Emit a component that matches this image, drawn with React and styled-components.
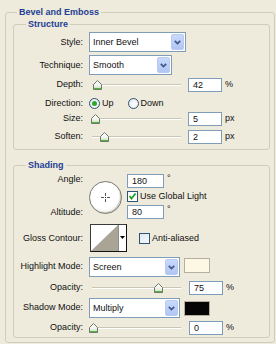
import React from 'react'
import styled, { createGlobalStyle } from 'styled-components'

// Photoshop "Bevel and Emboss" layer style panel, XP look

const GlobalStyle = createGlobalStyle`
  html, body {
    margin: 0;
    padding: 0;
    background: #eeeadc;
  }
  body {
    font-family: "Liberation Sans", Arial, sans-serif;
    font-size: 9px;
    color: #111;
  }
`

const Chevron = () => (
  <svg width="7" height="5" viewBox="0 0 7 5">
    <polyline points="0.8,0.8 3.5,3.6 6.2,0.8" fill="none" stroke="#42578a" strokeWidth="1.7" />
  </svg>
)

const Thumb = () => (
  <svg width="9" height="10" viewBox="0 0 9 10">
    <defs>
      <linearGradient id="thumbFill" x1="0" y1="0" x2="0" y2="1">
        <stop offset="0" stopColor="#ffffff" />
        <stop offset="0.6" stopColor="#eef2ea" />
        <stop offset="1" stopColor="#b5dcab" />
      </linearGradient>
    </defs>
    <path d="M0.5 4.5 L4.5 0.5 L8.5 4.5 L8.5 9.5 L0.5 9.5 Z" fill="url(#thumbFill)" stroke="#6f776b" />
    <line x1="1" y1="8.5" x2="8" y2="8.5" stroke="#4fb63f" />
  </svg>
)

const Check = () => (
  <svg width="9" height="9" viewBox="0 0 9 9">
    <polyline points="1.5,4 3.5,6.5 7.5,1.5" fill="none" stroke="#21a121" strokeWidth="1.8" />
  </svg>
)

const Crosshair = () => (
  <svg width="9" height="9" viewBox="0 0 9 9">
    <line x1="0" y1="4.5" x2="3" y2="4.5" stroke="#555" />
    <line x1="6" y1="4.5" x2="9" y2="4.5" stroke="#555" />
    <line x1="4.5" y1="0" x2="4.5" y2="3" stroke="#555" />
    <line x1="4.5" y1="6" x2="4.5" y2="9" stroke="#555" />
    <rect x="4" y="4" width="1" height="1" fill="#333" />
  </svg>
)

function Dropdown({ value, width }) {
  return (
    <Select $w={width}>
      <SelectText>{value}</SelectText>
      <SelectButton><Chevron /></SelectButton>
    </Select>
  )
}

function Slider({ value, max, travel = 87 }) {
  return (
    <SliderBox>
      <Track />
      <ThumbSlot style={{ left: Math.round((value / max) * travel) }}>
        <Thumb />
      </ThumbSlot>
    </SliderBox>
  )
}

function SliderRow({ label, value, max, unit, gap }) {
  return (
    <Row $h={15}>
      <Label>{label}</Label>
      <Slider value={value} max={max} />
      <NumberBox $gap={gap}>{value}</NumberBox>
      <Unit>{unit}</Unit>
    </Row>
  )
}

export default function App() {
  return (
    <Panel>
      <GlobalStyle />
      <Group>
        <Legend $indent={11}>Bevel and Emboss</Legend>
        <OuterBody>
          <Group>
            <Legend $indent={12}>Structure</Legend>
            <Body $top={2} $bottom={5}>
              <Row $h={20}>
                <Label>Style:</Label>
                <Dropdown value="Inner Bevel" width={97} />
              </Row>
              <Row $h={20} $mt={3}>
                <Label>Technique:</Label>
                <Dropdown value="Smooth" width={83} />
              </Row>
              <Spaced $mt={2}>
                <SliderRow label="Depth:" value={42} max={1000} unit="%" gap={7} />
              </Spaced>
              <Row $h={14} $mt={4}>
                <Label>Direction:</Label>
                <Radio checked />
                <RadioText>Up</RadioText>
                <Radio $ml={14} />
                <RadioText>Down</RadioText>
              </Row>
              <Spaced $mt={1}>
                <SliderRow label="Size:" value={5} max={250} unit="px" gap={7} />
              </Spaced>
              <Spaced $mt={3}>
                <SliderRow label="Soften:" value={2} max={16} unit="px" gap={7} />
              </Spaced>
            </Body>
          </Group>

          <ShadingGroup>
            <Legend $indent={12}>Shading</Legend>
            <Body $top={0} $bottom={2}>
              <AngleBlock>
                <AngleLabels>
                  <Label>Angle:</Label>
                  <Label>Altitude:</Label>
                </AngleLabels>
                <Dial><Crosshair /></Dial>
                <AngleControls>
                  <Inline>
                    <NumberBox $w={37}>180</NumberBox>
                    <Degree>°</Degree>
                  </Inline>
                  <Inline>
                    <CheckBox $checked><Check /></CheckBox>
                    <CheckText>Use Global Light</CheckText>
                  </Inline>
                  <Inline>
                    <NumberBox $w={37}>80</NumberBox>
                    <Degree>°</Degree>
                  </Inline>
                </AngleControls>
              </AngleBlock>

              <Row $h={28} $mt={4}>
                <Label>Gloss Contour:</Label>
                <Contour>
                  <svg width="27" height="26" viewBox="0 0 27 26">
                    <rect width="27" height="26" fill="#ffffff" />
                    <polygon points="0,26 27,0 27,26" fill="#aaa497" />
                  </svg>
                  <ContourArrow>
                    <svg width="5" height="3" viewBox="0 0 5 3">
                      <polygon points="0,0 5,0 2.5,3" fill="#000" />
                    </svg>
                  </ContourArrow>
                </Contour>
                <CheckBox $ml={12} />
                <CheckText>Anti-aliased</CheckText>
              </Row>

              <Row $h={20} $mt={5} $align="flex-start">
                <Label $pt={4}>Highlight Mode:</Label>
                <Dropdown value="Screen" width={91} />
                <Swatch $color="#fdf8e3" />
              </Row>
              <Spaced $mt={3}>
                <SliderRow label="Opacity:" value={75} max={100} unit="%" gap={8} />
              </Spaced>
              <Row $h={20} $mt={3} $align="flex-start">
                <Label $pt={4}>Shadow Mode:</Label>
                <Dropdown value="Multiply" width={91} />
                <Swatch $color="#050505" $mt={3} />
              </Row>
              <Spaced $mt={2}>
                <SliderRow label="Opacity:" value={0} max={100} unit="%" gap={8} />
              </Spaced>
            </Body>
          </ShadingGroup>
        </OuterBody>
      </Group>
    </Panel>
  )
}

const Panel = styled.div`
  width: 276px;
  height: 344px;
  box-sizing: border-box;
  padding: 6px 1px 0 5px;
  overflow: hidden;
`

const Group = styled.fieldset`
  margin: 0;
  padding: 0;
  min-width: 0;
  border: 1px solid #d0cdbd;
  border-radius: 3px;
`

const ShadingGroup = styled(Group)`
  margin-top: 9px;
`

const Legend = styled.legend`
  margin-left: ${p => p.$indent}px;
  padding: 0 2px;
  font-weight: bold;
  font-size: 9px;
  line-height: 12px;
  color: #1d3f94;
`

const OuterBody = styled.div`
  padding: 0 4px 4px 7px;
`

const Body = styled.div`
  padding: ${p => p.$top}px 0 ${p => p.$bottom}px 0;
`

const Row = styled.div`
  display: flex;
  align-items: ${p => p.$align || 'center'};
  height: ${p => p.$h}px;
  margin-top: ${p => p.$mt || 0}px;
`

const Spaced = styled.div`
  margin-top: ${p => p.$mt || 0}px;
`

const Label = styled.span`
  width: 69px;
  flex: none;
  margin-right: 6px;
  padding-top: ${p => p.$pt || 0}px;
  text-align: right;
  line-height: 11px;
  white-space: nowrap;
`

const Select = styled.div`
  width: ${p => p.$w}px;
  height: 20px;
  flex: none;
  box-sizing: border-box;
  border: 1px solid #7f9db9;
  background: #fff;
  display: flex;
  align-items: stretch;
  padding: 1px;
`

const SelectText = styled.span`
  flex: 1;
  padding-left: 2px;
  line-height: 16px;
`

const SelectButton = styled.span`
  width: 13px;
  display: flex;
  align-items: center;
  justify-content: center;
  border-radius: 2px;
  background: linear-gradient(#c9d9fc, #b2c6f3);
  border: 1px solid #b8caf0;
  box-sizing: border-box;
`

const SliderBox = styled.div`
  position: relative;
  width: 92px;
  height: 15px;
  flex: none;
  display: flex;
  align-items: center;
`

const Track = styled.div`
  margin-left: 3px;
  flex: 1;
  height: 0;
  border-top: 1px solid #c9c6b6;
  border-bottom: 1px solid #ffffff;
`

const ThumbSlot = styled.div`
  position: absolute;
  top: 3px;
  width: 9px;
  height: 10px;
  display: flex;
`

const NumberBox = styled.div`
  width: ${p => p.$w || 34}px;
  height: 14px;
  flex: none;
  margin-left: ${p => p.$gap || 0}px;
  box-sizing: border-box;
  border: 1px solid #7f9db9;
  background: #fff;
  padding-left: 4px;
  line-height: 12px;
`

const Unit = styled.span`
  margin-left: 3px;
  line-height: 11px;
`

const Radio = styled.span`
  width: 11px;
  height: 11px;
  flex: none;
  margin-left: ${p => p.$ml || 0}px;
  box-sizing: border-box;
  border-radius: 50%;
  border: 1px solid #2d5474;
  background: radial-gradient(circle at 60% 60%, #ffffff, #dfe3e6);
  display: flex;
  align-items: center;
  justify-content: center;

  &::after {
    content: '';
    display: ${p => (p.checked ? 'block' : 'none')};
    width: 5px;
    height: 5px;
    border-radius: 50%;
    background: #2aa82a;
  }
`

const RadioText = styled.span`
  margin-left: 2px;
  line-height: 11px;
`

const AngleBlock = styled.div`
  display: flex;
  height: 49px;
`

const AngleLabels = styled.div`
  display: flex;
  flex-direction: column;
  justify-content: space-between;
  padding: 3px 0 2px;
`

const Dial = styled.div`
  width: 33px;
  height: 33px;
  margin-top: 10px;
  flex: none;
  box-sizing: border-box;
  border-radius: 50%;
  border: 1px solid #7b7a72;
  background: radial-gradient(circle at 45% 40%, #ffffff 55%, #e4e4e0);
  box-shadow: inset -1px -1px 1px #c9c9c4;
  display: flex;
  align-items: center;
  justify-content: center;
`

const AngleControls = styled.div`
  margin-left: 5px;
  padding-top: 3px;
  display: flex;
  flex-direction: column;
  gap: 3px;
`

const Inline = styled.div`
  display: flex;
  align-items: center;
`

const Degree = styled.span`
  align-self: flex-start;
  margin-left: 3px;
  line-height: 9px;
`

const CheckBox = styled.span`
  width: 11px;
  height: 11px;
  flex: none;
  margin-left: ${p => p.$ml || 0}px;
  box-sizing: border-box;
  border: 1px solid #2d5474;
  background: ${p => (p.$checked ? '#ffffff' : 'linear-gradient(135deg, #dfe9f3, #f6f9fc)')};
  display: flex;
  align-items: center;
  justify-content: center;
`

const CheckText = styled.span`
  margin-left: 2px;
  line-height: 11px;
  white-space: nowrap;
`

const Contour = styled.div`
  width: 37px;
  height: 28px;
  flex: none;
  margin-left: 1px;
  box-sizing: border-box;
  border: 1px solid #3b3b3b;
  border-right-color: #111;
  border-bottom-color: #111;
  background: #fff;
  display: flex;
`

const ContourArrow = styled.div`
  flex: 1;
  border-left: 1px solid #8d8d8d;
  display: flex;
  align-items: center;
  justify-content: center;
  padding-bottom: 2px;
`

const Swatch = styled.div`
  width: 26px;
  height: 15px;
  flex: none;
  margin-left: 4px;
  margin-top: ${p => p.$mt || 1}px;
  box-sizing: border-box;
  border: 1px solid #b3b09f;
  background: ${p => p.$color};
`
